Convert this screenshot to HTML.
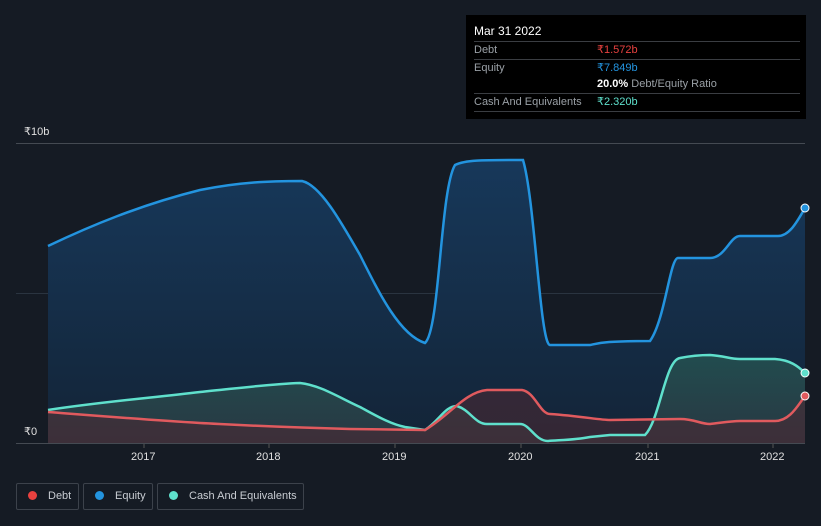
<!DOCTYPE html>
<html><head><meta charset="utf-8"><style>
html,body{margin:0;width:821px;height:526px;overflow:hidden}
body{background:#151b24;font-family:"Liberation Sans",sans-serif;position:relative}
.tt{position:absolute;left:466px;top:15px;width:340px;height:104px;background:#000;color:#fff;font-size:11px}
.row{position:absolute;left:8px;width:326px;border-top:1px solid #3a3d42;height:17px;line-height:17px;color:#9aa0a6;white-space:nowrap}
.v{position:absolute;left:123px}
.leg{position:absolute;top:483px;height:27px;border:1px solid #3c424b;border-radius:2px;color:#c8ccd2;font-size:11px;line-height:25px;box-sizing:border-box;white-space:nowrap}
.dot{display:inline-block;width:9px;height:9px;border-radius:50%;margin:0 11px 0 11px;vertical-align:-1px}
.lab{position:absolute;color:#e0e0e0;font-size:11px}
</style></head><body>
<svg width="821" height="526" style="position:absolute;left:0;top:0">
<defs>
<linearGradient id="ge" x1="0" y1="0" x2="0" y2="1"><stop offset="0" stop-color="#17385a"/><stop offset="1" stop-color="#132437"/></linearGradient>
<linearGradient id="gc" x1="0" y1="0" x2="0" y2="1"><stop offset="0" stop-color="#235050"/><stop offset="1" stop-color="#2b3a44"/></linearGradient>
</defs>
<line x1="16" y1="143.5" x2="805" y2="143.5" stroke="#444a52"/>
<line x1="16" y1="293.5" x2="805" y2="293.5" stroke="#2a3440"/>
<path d="M48,246 C90,226 140,205 200,190 C240,182 270,181 302,181 C320,185 340,220 360,255 C380,295 400,335 425,343 C440,330 440,190 455,165 C465,160 480,160 523,160 C535,200 540,345 550,345 L590,345 C600,343 605,341 650,341 C665,320 670,258 678,258 L710,258 C725,258 730,236 740,236 L778,236 C790,236 798,220 805,208 L805,443 L48,443Z" fill="url(#ge)"/>
<path d="M48,410 C100,402 150,398 200,392 C240,388 270,384 300,383 C320,385 340,398 360,407 C375,415 390,424 405,427 L425,430 C440,420 445,406 457,406 C470,410 475,424 487,424 L520,424 C530,424 535,441 548,441 C560,440 575,440 590,437 L610,435 L645,435 C660,420 665,360 680,358 C695,355 705,355 710,355 C725,356 730,359 740,359 L775,359 C790,360 798,366 805,373 L805,443 L48,443Z" fill="url(#gc)" opacity="0.9"/>
<path d="M48,412 C100,416 150,420 200,423 C240,425 270,427 350,429 L425,430 C450,415 465,392 487,390 L522,390 C535,392 540,414 550,414 C580,416 600,420 610,420 L680,419 C695,419 700,424 710,424 C720,423 730,421 740,421 L775,421 C790,421 798,405 805,396 L805,443 L48,443Z" fill="#4a2a33" opacity="0.6"/>
<path d="M48,246 C90,226 140,205 200,190 C240,182 270,181 302,181 C320,185 340,220 360,255 C380,295 400,335 425,343 C440,330 440,190 455,165 C465,160 480,160 523,160 C535,200 540,345 550,345 L590,345 C600,343 605,341 650,341 C665,320 670,258 678,258 L710,258 C725,258 730,236 740,236 L778,236 C790,236 798,220 805,208" fill="none" stroke="#2394df" stroke-width="2.5"/>
<path d="M48,410 C100,402 150,398 200,392 C240,388 270,384 300,383 C320,385 340,398 360,407 C375,415 390,424 405,427 L425,430 C440,420 445,406 457,406 C470,410 475,424 487,424 L520,424 C530,424 535,441 548,441 C560,440 575,440 590,437 L610,435 L645,435 C660,420 665,360 680,358 C695,355 705,355 710,355 C725,356 730,359 740,359 L775,359 C790,360 798,366 805,373" fill="none" stroke="#5fe0cc" stroke-width="2.5"/>
<path d="M48,412 C100,416 150,420 200,423 C240,425 270,427 350,429 L425,430 C450,415 465,392 487,390 L522,390 C535,392 540,414 550,414 C580,416 600,420 610,420 L680,419 C695,419 700,424 710,424 C720,423 730,421 740,421 L775,421 C790,421 798,405 805,396" fill="none" stroke="#e05a5e" stroke-width="2.5"/>
<circle cx="805" cy="208" r="4" fill="#2394df" stroke="#fff" stroke-width="1"/>
<circle cx="805" cy="373" r="4" fill="#5fe0cc" stroke="#fff" stroke-width="1"/>
<circle cx="805" cy="396" r="4" fill="#e05a5e" stroke="#fff" stroke-width="1"/>
<rect x="16" y="423" width="32" height="20" fill="#151b24"/>
<line x1="16" y1="443.5" x2="805" y2="443.5" stroke="#444a52"/>
<g stroke="#555" ><line x1="144" y1="444" x2="144" y2="448"/><line x1="269" y1="444" x2="269" y2="448"/><line x1="395" y1="444" x2="395" y2="448"/><line x1="521" y1="444" x2="521" y2="448"/><line x1="648" y1="444" x2="648" y2="448"/><line x1="773" y1="444" x2="773" y2="448"/></g>
</svg>
<div class="lab" style="left:24px;top:125px">₹10b</div>
<div class="lab" style="left:24px;top:425px">₹0</div>
<div class="lab" style="left:131px;top:451px">2017</div>
<div class="lab" style="left:256px;top:451px">2018</div>
<div class="lab" style="left:382px;top:451px">2019</div>
<div class="lab" style="left:508px;top:451px">2020</div>
<div class="lab" style="left:635px;top:451px">2021</div>
<div class="lab" style="left:760px;top:451px">2022</div>
<div class="tt">
<div style="position:absolute;left:8px;top:9px;font-size:12px">Mar 31 2022</div>
<div class="row" style="top:26px">Debt<span class="v" style="color:#e8413f">₹1.572b</span></div>
<div class="row" style="top:44px">Equity<span class="v" style="color:#2394df">₹7.849b</span></div>
<div class="row" style="top:61px;border-top:none"><span class="v" style="color:#fff"><b>20.0%</b> <span style="color:#9aa0a6">Debt/Equity Ratio</span></span></div>
<div class="row" style="top:78px;border-bottom:1px solid #3a3d42">Cash And Equivalents<span class="v" style="color:#5fe0cc">₹2.320b</span></div>
</div>
<div class="leg" style="left:16px;width:63px"><span class="dot" style="background:#e8413f"></span>Debt</div>
<div class="leg" style="left:83px;width:70px"><span class="dot" style="background:#2394df"></span>Equity</div>
<div class="leg" style="left:157px;width:147px"><span class="dot" style="background:#5fe0cc"></span>Cash And Equivalents</div>
</body></html>
